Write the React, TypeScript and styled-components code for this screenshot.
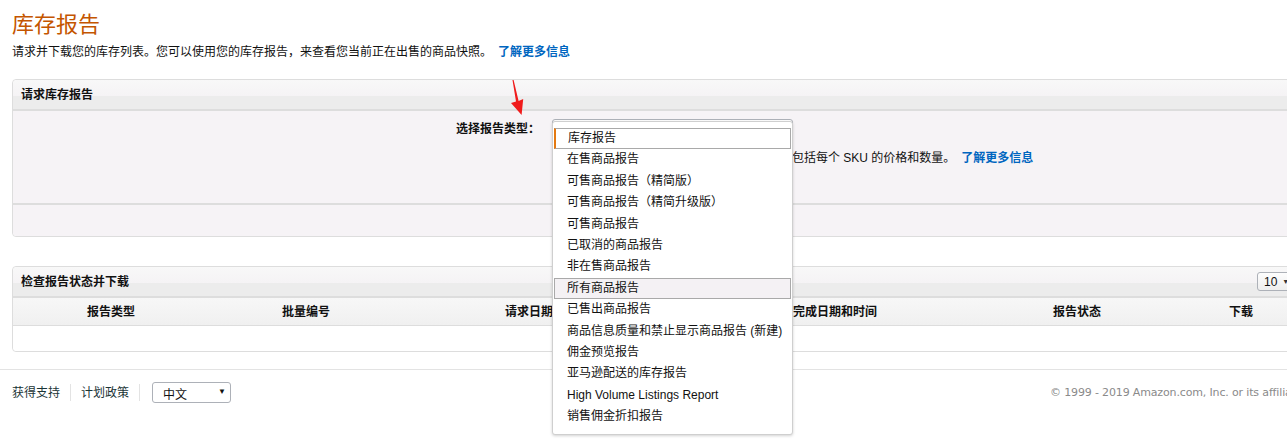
import React from "react";
import styled, { createGlobalStyle } from "styled-components";

const GlobalStyle = createGlobalStyle`
  * { box-sizing: border-box; }
  html, body { margin: 0; padding: 0; background: #fff; overflow: hidden; }
  body {
    font-family: "Liberation Sans", "Noto Sans CJK SC", sans-serif;
    font-size: 12px;
    color: #111;
  }
`;

const Page = styled.div`
  position: relative;
  width: 1320px;
  min-height: 448px;
`;

const Main = styled.div`
  padding: 12px 12px 0;
`;

const Title = styled.h1`
  margin: 0;
  font-size: 22px;
  line-height: 26px;
  font-weight: normal;
  color: #c45500;
`;

const Intro = styled.p`
  margin: 6px 0 0;
  font-size: 12px;
  line-height: 16px;
`;

const Link = styled.a`
  color: #0066c0;
  font-weight: bold;
  text-decoration: none;
  margin-left: 6px;
`;

const Panel = styled.section<{ $mt: number }>`
  margin-top: ${(p) => p.$mt}px;
  border: 1px solid #dddddd;
  border-radius: 4px;
  background: #fff;
`;

const PanelHeader = styled.div`
  height: 31px;
  padding: 0 8px 0 8px;
  display: flex;
  align-items: center;
  justify-content: space-between;
  border-bottom: 2px solid #dddddd;
  border-radius: 4px 4px 0 0;
  background: linear-gradient(#f8f8f8, #f5f3f5 55%, #ececec 56%, #ececec);
  font-weight: bold;
  line-height: 16px;
`;

const PanelBody = styled.div`
  height: 94px;
  border-bottom: 2px solid #dddddd;
  background: #f6f3f6;
  padding-top: 8px;
`;

const PanelFoot = styled.div`
  height: 31px;
  background: #f6f3f6;
  border-radius: 0 0 4px 4px;
`;

const FieldRow = styled.div`
  display: flex;
  gap: 12px;
`;

const FieldLabel = styled.label`
  width: 527px;
  text-align: right;
  font-weight: bold;
  line-height: 20px;
`;

const FieldControl = styled.div`
  display: flex;
  flex-direction: column;
`;

const SelectWrap = styled.div`
  position: relative;
  width: 241px;
  height: 20px;
`;

const SelectBox = styled.div`
  height: 20px;
  border: 1px solid #adb1b8;
  border-radius: 3px;
  background: #fff;
`;

const Menu = styled.ul`
  position: absolute;
  z-index: 5;
  left: 0;
  top: 2px;
  width: 241px;
  margin: 0;
  padding: 6px 1px 7px;
  list-style: none;
  background: #fff;
  border: 1px solid #cfcfcf;
  border-radius: 3px;
  box-shadow: 0 1px 3px rgba(0, 0, 0, 0.18);
`;

const MenuItem = styled.li<{ $state?: "selected" | "hover" }>`
  height: 21.4px;
  line-height: 19.4px;
  padding-left: 12px;
  font-size: 12px;
  color: #111;
  white-space: nowrap;
  border: 1px solid
    ${(p) => (p.$state ? "#a9a9a9" : "transparent")};
  border-left: ${(p) =>
    p.$state === "selected" ? "2px solid #e47911" : p.$state ? "1px solid #a9a9a9" : "1px solid transparent"};
  background: ${(p) => (p.$state === "hover" ? "#f4f1f4" : "#fff")};
`;

const Description = styled.p`
  margin: 11px 0 0;
  line-height: 16px;
  white-space: nowrap;
`;

const PageSize = styled.div`
  display: flex;
  align-items: center;
  gap: 5px;
  width: 42px;
  height: 19px;
  padding-left: 6px;
  border: 1px solid #adb1b8;
  border-radius: 3px;
  background: linear-gradient(#fdfdfd, #eeeeee);
  font-weight: normal;
  font-size: 12px;
`;

const Caret = styled.span`
  font-size: 7px;
  color: #333;
`;

const TableHead = styled.div`
  display: grid;
  grid-template-columns: 196px 194px 288px 288px 196px 1fr;
  height: 28px;
  border-bottom: 1px solid #dddddd;
  background: linear-gradient(#f7f7f7, #f0f0f0);
`;

const HeadCell = styled.div`
  display: flex;
  align-items: center;
  justify-content: center;
  font-weight: bold;
  line-height: 16px;
`;

const EmptyRow = styled.div`
  height: 25px;
  background: #fff;
  border-radius: 0 0 4px 4px;
`;

const Footer = styled.footer`
  margin-top: 17px;
  border-top: 1px solid #e3e3e3;
  padding: 12px 12px 0;
  display: flex;
  align-items: center;
  justify-content: space-between;
`;

const FooterLinks = styled.div`
  display: flex;
  align-items: center;
`;

const FooterLink = styled.a`
  color: #1a3436;
  text-decoration: none;
  line-height: 16px;
`;

const Divider = styled.span`
  width: 1px;
  height: 17px;
  background: #e3e3e3;
  margin: 0 10px 0 10px;
`;

const LangSelect = styled.div`
  margin-left: 2px;
  width: 79px;
  height: 21px;
  display: flex;
  align-items: center;
  justify-content: space-between;
  padding: 2px 4px 0 10px;
  border: 1px solid #adb1b8;
  border-radius: 3px;
  background: #fff;
  font-size: 12px;
  color: #111;
`;

const LangCaret = styled.span`
  font-size: 8px;
  color: #111;
  margin-top: -4px;
`;

const Copyright = styled.div`
  color: #8a8a8a;
  font-family: "DejaVu Sans", sans-serif;
  font-size: 11px;
  letter-spacing: -0.15px;
`;

const Annotation = styled.svg`
  position: absolute;
  left: 505px;
  top: 78px;
  overflow: visible;
`;

const options = [
  "库存报告",
  "在售商品报告",
  "可售商品报告（精简版）",
  "可售商品报告（精简升级版）",
  "可售商品报告",
  "已取消的商品报告",
  "非在售商品报告",
  "所有商品报告",
  "已售出商品报告",
  "商品信息质量和禁止显示商品报告 (新建)",
  "佣金预览报告",
  "亚马逊配送的库存报告",
  "High Volume Listings Report",
  "销售佣金折扣报告",
];

const columns = ["报告类型", "批量编号", "请求日期和时间", "完成日期和时间", "报告状态", "下载"];

export default function App() {
  return (
    <Page>
      <GlobalStyle />
      <Main>
        <Title>库存报告</Title>
        <Intro>
          请求并下载您的库存列表。您可以使用您的库存报告，来查看您当前正在出售的商品快照。
          <Link href="#">了解更多信息</Link>
        </Intro>

        <Panel $mt={19}>
          <PanelHeader>请求库存报告</PanelHeader>
          <PanelBody>
            <FieldRow>
              <FieldLabel>选择报告类型：</FieldLabel>
              <FieldControl>
                <SelectWrap>
                  <SelectBox />
                  <Menu>
                    {options.map((o, i) => (
                      <MenuItem key={o} $state={i === 0 ? "selected" : i === 7 ? "hover" : undefined}>
                        {o}
                      </MenuItem>
                    ))}
                  </Menu>
                </SelectWrap>
                <Description>
                  库存报告提供了您所有在售商品的数量概况，包括每个 SKU 的价格和数量。
                  <Link href="#">了解更多信息</Link>
                </Description>
              </FieldControl>
            </FieldRow>
          </PanelBody>
          <PanelFoot />
        </Panel>

        <Panel $mt={29}>
          <PanelHeader>
            检查报告状态并下载
            <PageSize>
              10 <Caret>▼</Caret>
            </PageSize>
          </PanelHeader>
          <TableHead>
            {columns.map((c) => (
              <HeadCell key={c}>{c}</HeadCell>
            ))}
          </TableHead>
          <EmptyRow />
        </Panel>
      </Main>

      <Footer>
        <FooterLinks>
          <FooterLink href="#">获得支持</FooterLink>
          <Divider />
          <FooterLink href="#">计划政策</FooterLink>
          <Divider />
          <LangSelect>
            中文 <LangCaret>▼</LangCaret>
          </LangSelect>
        </FooterLinks>
        <Copyright>© 1999 - 2019 Amazon.com, Inc. or its affiliates</Copyright>
      </Footer>

      <Annotation width="24" height="40" viewBox="0 0 24 40">
        <polygon
          points="7.5,2 8.6,2 13.6,23 18.2,21 16.6,37 6,25 11,23.6"
          fill="#f01b1b"
        />
      </Annotation>
    </Page>
  );
}
